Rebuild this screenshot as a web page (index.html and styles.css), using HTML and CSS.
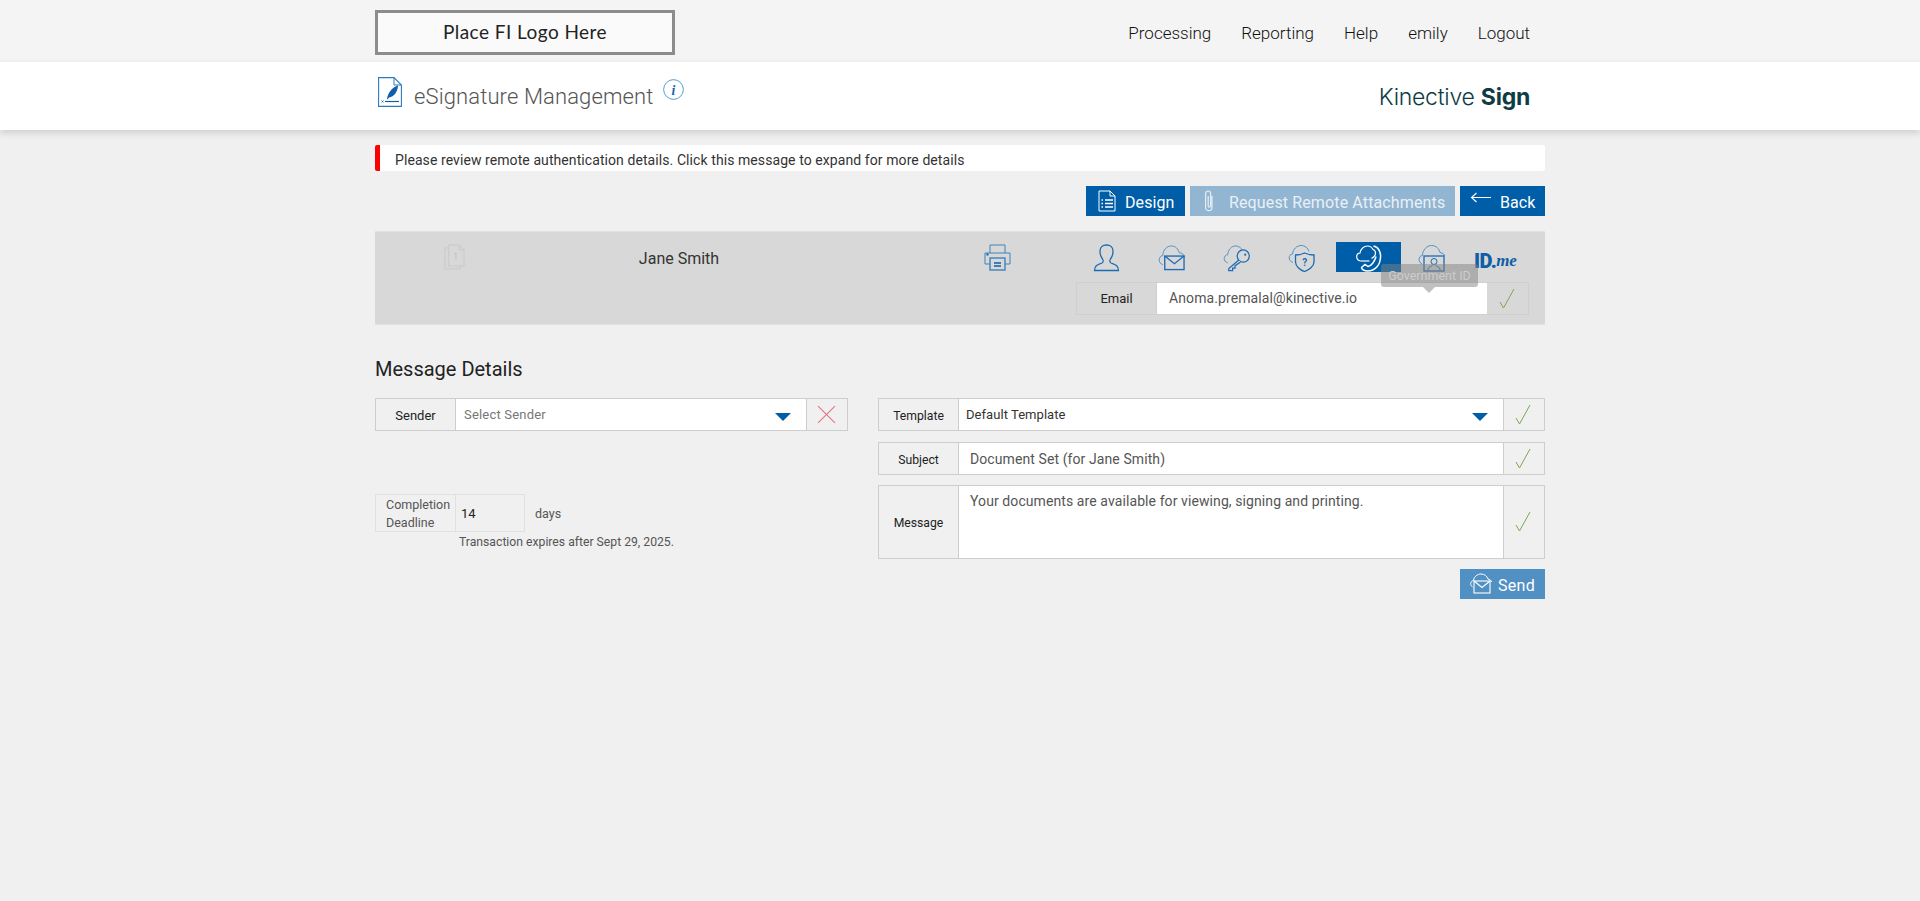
FILE: index.html
```html
<!DOCTYPE html>
<html lang="en">
<head>
<meta charset="utf-8">
<title>eSignature Management</title>
<link rel="stylesheet" href="styles.css">
</head>
<body>
<header class="topbar">
  <div class="wrap topbar-in">
    <div class="logo-box">Place FI Logo Here</div>
    <nav class="nav">
      <a>Processing</a><a>Reporting</a><a>Help</a><a>emily</a><a>Logout</a>
    </nav>
  </div>
</header>
<section class="band">
  <div class="wrap band-in">
    <svg class="doc-sign" viewBox="0 0 24 30" fill="none"><path d="M.6.6H16L23.4 8V29.4H.6Z" stroke="#2a7ac0" stroke-width="1.1"/><path d="M16 .6V8H23.4" stroke="#2a7ac0" stroke-width="1"/><path d="M9 22C10 15 15 10 20 8.500C20 14 16 20 11 20.500L9.500 22.500Z" fill="#0d5fa8"/><path d="M7 24.500H21" stroke="#0d5fa8" stroke-width="1.200"/><path d="M3.500 23.500L5.500 25.500M5.500 23.500L3.500 25.500" stroke="#0d5fa8" stroke-width=".8"/></svg>
    <h1 class="title">eSignature Management</h1>
    <svg class="info" viewBox="0 0 20 20"><circle cx="10" cy="10" r="9.400" fill="none" stroke="#4b94cc" stroke-width=".9"/><text x="10" y="15" text-anchor="middle" class="info-i">i</text></svg>
    <div class="brand">Kinective <b>Sign</b></div>
  </div>
</section>
<main class="wrap">
  <div class="alert">Please review remote authentication details. Click this message to expand for more details</div>
  <div class="actions">
    <button class="btn btn-design"><svg class="btn-ico" viewBox="0 0 18 22" fill="none" stroke="#fff" stroke-width="1"><path d="M1 1H12L17 6V21H1Z"/><path d="M12 1V6H17"/><path d="M3.500 10H5M7 10H15M3.500 13.500H5M7 13.500H15M3.500 17H5M7 17H15" stroke-width="1.500"/></svg>Design</button>
    <button class="btn btn-attach"><svg class="btn-ico clip" viewBox="0 0 12 24" fill="none" stroke="#e6eef5" stroke-width="1.200"><path d="M9 7V18.500A3.200 3.200 0 0 1 2.600 18.500V4.500A2.500 2.500 0 0 1 7.600 4.500V17A1.200 1.200 0 0 1 5.200 17V7"/></svg>Request Remote Attachments</button>
    <button class="btn btn-back"><svg class="btn-ico arrow" viewBox="0 0 22 12" fill="none" stroke="#fff" stroke-width="1.100"><path d="M21 5.500H1.500M6.500 1L1.500 5.500L6.500 10"/></svg>Back</button>
  </div>
  <section class="panel">
    <div class="cell-doc">
      <svg class="pages" viewBox="0 0 22 27" fill="none" stroke="#c8c8c8" stroke-width="1"><path d="M5 1H16L21 6V23H5Z"/><path d="M5 4H1V26H17V23"/><path d="M16 1V6H21"/><path d="M12.500 9V16M11 10.500L12.500 9" stroke-width="1.500"/></svg>
    </div>
    <div class="cell-name">Jane Smith</div>
    <div class="cell-print">
      <svg class="printer" viewBox="0 0 27 27" fill="none" stroke="#3f83bd" stroke-width="1"><path d="M6 9V1H21V9"/><path d="M6 20H1V9H26V20H21"/><path d="M2.500 10.500H4.500" stroke="#0d5fa8" stroke-width="2"/><rect x="6" y="14" width="15" height="12" stroke-width="1.400" fill="#d8d8d8"/><path d="M10 19H17M10 22H17" stroke="#0d5fa8" stroke-width="1.300"/></svg>
    </div>
    <div class="cell-auth">
      <div class="tabs">
        <div class="tab"><svg class="ti" viewBox="0 0 26 28" fill="none" stroke="#1b6cb4" stroke-width="1.300"><path d="M1 26.500C1 21 5 20.500 8.500 19C10 18.300 10 16.500 9 15C7 12.500 6.500 9 6.500 7C6.500 3 9.500 1 13 1S19.500 3 19.500 7C19.500 9 19 12.500 17 15C16 16.500 16 18.300 17.500 19C21 20.500 25 21 25 26.500Z"/></svg></div>
        <div class="tab"><svg class="ti" viewBox="0 0 28 28" fill="none" stroke="#1b6cb4"><path d="M5 21C0 19.500 0 12 5 11.500C5 6 9 1.500 14 1.500C18 1.500 21 4.500 22 8.500C25.500 9 27.500 11 27.500 13" stroke="#4f8fc6" stroke-width="1"/><rect x="7" y="12" width="20" height="14" stroke-width="1.400" fill="#d8d8d8"/><path d="M7 12L17 20L27 12" stroke-width="1.300"/></svg></div>
        <div class="tab"><svg class="ti" viewBox="0 0 28 28" fill="none" stroke="#1b6cb4"><path d="M5 19C0 18 0 11 5 10.500C5 5.500 9 1.500 13 1.500C16 1.500 19 3.500 20.500 6.500" stroke="#4f8fc6" stroke-width="1"/><circle cx="21" cy="12" r="6.300" stroke-width="1.300" fill="#d8d8d8"/><circle cx="23" cy="10.500" r="1.100" fill="#1b6cb4" stroke="none"/><path d="M16.500 16L6 25V27H10V24.500H12.500V22L18 18.500" stroke-width="1.300" fill="#d8d8d8"/></svg></div>
        <div class="tab"><svg class="ti" viewBox="0 0 27 28" fill="none" stroke="#1b6cb4"><path d="M5 18.500C0 17 0 10.500 4.500 10C5 5 9 1.500 13 1.500C17 1.500 20 4 21 7.500" stroke="#4f8fc6" stroke-width="1"/><path d="M16.500 9C20 10.500 23 11 26 11V18C26 22 21 26 16.500 27.500C12 26 7.500 22 7.500 18V11C10.500 11 13.500 10.500 16.500 9Z" stroke-width="1.300" fill="#d8d8d8"/><text x="16.700" y="22" text-anchor="middle" class="q">?</text></svg></div>
        <div class="tab tab-active"><svg class="ti" viewBox="0 0 26 28" fill="none" stroke="#fff"><path d="M5 17C0 16 0 9.500 4.500 9C5 5 8.500 2 12 2C14.500 2 16.500 3.500 17.500 5.500C19 6 20 7 20 9C20 12 18 13.500 16 14.500" stroke-width="1.200"/><path d="M5 17H14" stroke-width="1.200"/><path d="M18 2C23 3 25.500 8 25 13.500C24.500 21 20 27 12 27C9 27 6 25.500 6 23.500L9.500 20.500L12.500 22.500C16 22 19.500 17 20.500 12.500" stroke-width="1.500"/></svg></div>
        <div class="tab"><svg class="ti" viewBox="0 0 27 28" fill="none" stroke="#1b6cb4"><path d="M4 20C0 18 0 12 4.500 11.500C4.500 6 9 1.500 13.500 1.500C18 1.500 21 4.500 22 8.500C25 9 26.500 10.500 26.500 12" stroke="#4f8fc6" stroke-width="1"/><rect x="6" y="12" width="20" height="15" stroke-width="1.300" fill="#d8d8d8"/><circle cx="16" cy="17.500" r="3"/><path d="M10 26C10 22.500 13 22.500 14.500 21.500M22 26C22 22.500 19 22.500 17.500 21.500"/></svg></div>
        <div class="tab idme"><span class="id">ID.</span><span class="me">me</span></div>
      </div>
      <div class="row email-row">
        <div class="lab lab-email">Email</div>
        <div class="val val-email">Anoma.premalal@kinective.io</div>
        <div class="tick tick-email"><svg class="check" viewBox="0 0 16 24" fill="none"><path d="M1 15L4.500 21L15 2" stroke="#7aa84f" stroke-width="1"/></svg></div>
      </div>
      <div class="tooltip">Government ID</div>
    </div>
  </section>
  <h2 class="section-title">Message Details</h2>
  <div class="columns">
    <div class="col-left">
      <div class="row">
        <div class="lab">Sender</div>
        <div class="val val-select placeholder">Select Sender<span class="caret"></span></div>
        <div class="tick"><svg class="cross" viewBox="0 0 18 18" fill="none"><path d="M1 1L17 17M17 1L1 17" stroke="#e0737d" stroke-width="1"/></svg></div>
      </div>
      <div class="deadline">
        <div class="dl-lab">Completion Deadline</div>
        <div class="dl-val">14</div>
        <div class="dl-unit">days</div>
      </div>
      <p class="expires">Transaction expires after Sept 29, 2025.</p>
    </div>
    <div class="col-right">
      <div class="row row-first">
        <div class="lab lab-r">Template</div>
        <div class="val val-select val-dark">Default Template<span class="caret"></span></div>
        <div class="tick"><svg class="check" viewBox="0 0 16 24" fill="none"><path d="M1 15L4.500 21L15 2" stroke="#7aa84f" stroke-width="1"/></svg></div>
      </div>
      <div class="row">
        <div class="lab lab-r">Subject</div>
        <div class="val val-text">Document Set (for Jane Smith)</div>
        <div class="tick"><svg class="check" viewBox="0 0 16 24" fill="none"><path d="M1 15L4.500 21L15 2" stroke="#7aa84f" stroke-width="1"/></svg></div>
      </div>
      <div class="row row-msg">
        <div class="lab lab-r">Message</div>
        <div class="val val-text val-msg">Your documents are available for viewing, signing and printing.</div>
        <div class="tick"><svg class="check" viewBox="0 0 16 24" fill="none"><path d="M1 15L4.500 21L15 2" stroke="#7aa84f" stroke-width="1"/></svg></div>
      </div>
      <div class="send-line">
        <button class="btn btn-send"><svg class="btn-ico send-ico" viewBox="0 0 22 22" fill="none" stroke="#fff"><path d="M2.500 14C0 12.500 0 8 3.500 7.500C4 3.500 7.500 1 11 1C14.500 1 17 3 18 6C20 6.500 21.500 7.500 21.500 9" stroke-width="1"/><rect x="4" y="8" width="16" height="12" stroke-width="1.100"/><path d="M4 8L12 14.500L20 8" stroke-width="1.100"/></svg>Send</button>
      </div>
    </div>
  </div>
</main>
</body>
</html>
```
FILE: styles.css
```css
* { box-sizing: border-box; }
html, body { margin: 0; height: 100%; }
body {
  background: #f0f0f0;
  font-family: Roboto, "Liberation Sans", sans-serif;
  color: #444;
  font-size: 14px;
  min-height: 901px;
}
.wrap { width: 1170px; margin: 0 auto; }

.topbar { background: #f4f4f4; height: 62px; }
.topbar-in { display: flex; justify-content: space-between; }
.logo-box {
  margin-top: 10px;
  width: 300px;
  height: 45px;
  border: 3px solid #8c8c8c;
  background: #fafafa;
  display: flex;
  align-items: center;
  justify-content: center;
  padding-bottom: 2px;
  font-family: Lato, sans-serif;
  font-weight: 400;
  font-size: 19px;
  letter-spacing: .45px;
  color: #222;
}
.nav {
  display: flex;
  gap: 30px;
  padding: 23px 15px 0 0;
  font-weight: 300;
  font-size: 17px;
  line-height: 20px;
  color: #111;
}

.band {
  background: #fff;
  height: 68px;
  box-shadow: 0 3px 7px rgba(0, 0, 0, .14);
  position: relative;
}
.band-in { display: flex; height: 68px; }
.doc-sign { width: 24px; height: 30px; margin: 15px 0 0 3px; flex: none; }
.title {
  margin: 21px 0 0 12px;
  font-weight: 300;
  font-size: 22px;
  line-height: 28px;
  letter-spacing: .12px;
  color: #555;
}
.info { width: 21px; height: 21px; margin: 17px 0 0 10px; flex: none; }
.info-i { font: italic bold 13px "Liberation Serif", serif; fill: #1566ad; }
.brand {
  margin: 20px 15px 0 auto;
  font-family: Inter, sans-serif;
  font-weight: 300;
  font-size: 23px;
  line-height: 30px;
  letter-spacing: -.25px;
  color: #0e3c44;
}
.brand b { font-weight: 700; }

.alert {
  margin-top: 15px;
  height: 26px;
  background: #fff;
  border-left: 5px solid #f00;
  border-radius: 2px;
  padding-left: 15px;
  line-height: 30px;
  font-size: 14px;
  letter-spacing: .08px;
  color: #333;
}

.actions { display: flex; justify-content: flex-end; gap: 5px; margin-top: 15px; }
.btn {
  height: 30px;
  border: 0;
  padding: 2px 0 0;
  color: #fff;
  font-family: Roboto, sans-serif;
  font-size: 16px;
  display: flex;
  align-items: center;
  background: #005ea8;
}
.btn-ico { flex: none; width: 18px; height: 22px; margin-top: -3px; }
.btn-design { width: 99px; padding-left: 12px; gap: 9px; letter-spacing: .1px; }
.btn-attach { width: 265px; padding-left: 13px; gap: 14px; background: #92b5d2; color: #e9f0f6; letter-spacing: .13px; }
.btn-attach .clip { width: 12px; height: 24px; }
.btn-back { width: 85px; padding-left: 10px; gap: 8px; letter-spacing: .1px; }
.btn-back .arrow { width: 22px; height: 12px; margin-top: -9px; }

.panel {
  margin-top: 15px;
  height: 94px;
  background: #d8d8d8;
  border: solid #e2e2e2;
  border-width: 1px 0;
  display: flex;
  position: relative;
}
.cell-doc { width: 160px; padding: 12px 0 0 69px; }
.pages { display: block; width: 21px; height: 26px; }
.cell-name { width: 288px; padding-top: 17px; text-align: center; font-size: 16px; line-height: 20px; color: #333; }
.cell-print { width: 128px; margin-left: 110px; padding-top: 12px; display: flex; justify-content: center; }
.printer { width: 27px; height: 27px; }
.cell-auth { margin-left: 15px; width: 455px; padding-top: 10px; position: relative; }
.tabs { display: flex; height: 30px; }
.tab { width: 65px; height: 30px; padding-right: 5px; display: flex; align-items: center; justify-content: center; }
.ti { width: 27px; height: 28px; margin-top: 1px; }
.tab-active { background: #005ea8; padding-right: 0; }
.idme { font-family: Roboto, sans-serif; color: #0f5ea6; align-items: flex-end; padding-right: 6px; }
.id { font-weight: 900; font-size: 20px; letter-spacing: -.6px; line-height: 22px; }
.me { font: italic bold 17px/22px "Liberation Serif", serif; }
.q { font: bold 10px Roboto, sans-serif; fill: #1b6cb4; stroke: none; }

.tooltip {
  position: absolute;
  left: 305px;
  top: 32px;
  width: 97px;
  height: 23px;
  background: rgba(130, 130, 130, .5);
  color: #ccc;
  border-radius: 3px;
  text-align: center;
  font-size: 12.500px;
  line-height: 23px;
}
.tooltip::after {
  content: "";
  position: absolute;
  left: 42px;
  top: 23px;
  border: 6px solid transparent;
  border-top-color: rgba(130, 130, 130, .5);
  border-bottom: 0;
}

.row {
  display: flex;
  height: 33px;
  border: 1px solid #cdcdcd;
  background: #f0f0f0;
}
.lab { width: 80px; flex: none; text-align: center; font-size: 13px; line-height: 33px; color: #222; border-right: 1px solid #cdcdcd; }
.val { flex: 1; min-width: 0; background: #fff; }
.tick { width: 41px; flex: none; display: flex; align-items: center; justify-content: center; padding-right: 2px; border-left: 1px solid #cdcdcd; }
.check { width: 16px; height: 24px; }
.cross { width: 19px; height: 19px; padding: 0; }

.email-row { margin-top: 10px; width: 453px; border-color: #cfcfcf; background: #d8d8d8; }
.lab-email { line-height: 32px; border-color: #cfcfcf; }
.val-email { padding-left: 12px; font-size: 14px; line-height: 30px; color: #555; letter-spacing: .1px; }
.tick-email { border: 0; }

.section-title { margin: 32px 0 0; font-weight: 400; font-size: 20px; line-height: 24px; color: #222; }

.columns { display: flex; gap: 30px; margin-top: 17px; }
.col-left { width: 473px; flex: none; }
.col-right { flex: 1; display: flex; flex-direction: column; gap: 10px; }
.row-first { margin-bottom: 1px; }

.val-select { position: relative; padding-left: 7px; font-size: 13px; line-height: 32px; }
.placeholder { color: #777; padding-left: 8px; letter-spacing: .2px; }
.val-dark { color: #333; letter-spacing: .05px; }
.caret {
  position: absolute;
  right: 15px;
  top: 14px;
  border: 8px solid transparent;
  border-top-color: #005ea8;
  border-bottom: 0;
}
.val-text { padding-left: 11px; font-size: 14px; line-height: 32px; letter-spacing: .09px; color: #555; }
.row-msg { height: 74px; }
.row-msg .lab { line-height: 74px; }
.val-msg { line-height: 30px; }
.lab-r { color: #222; font-size: 12.200px; line-height: 35px; }

.deadline { display: flex; margin-top: 63px; height: 38px; font-size: 13px; }
.dl-lab {
  width: 81px;
  border: 1px solid #e0e0e0;
  padding: 1px 0 0 10px;
  line-height: 18px;
  font-size: 12.500px;
  color: #555;
}
.dl-val {
  width: 69px;
  border: 1px solid #e0e0e0;
  border-left: 0;
  padding-left: 5px;
  line-height: 37px;
  color: #222;
}
.dl-unit { padding-left: 10px; line-height: 39px; font-size: 12.500px; color: #555; }
.expires { margin: 2px 0 0 84px; font-size: 12.200px; line-height: 17px; color: #555; }

.send-line { display: flex; justify-content: flex-end; }
.btn-send { width: 85px; padding-left: 10px; gap: 6px; background: #5190c3; letter-spacing: .3px; }
.btn-send .send-ico { width: 22px; height: 22px; }
```
